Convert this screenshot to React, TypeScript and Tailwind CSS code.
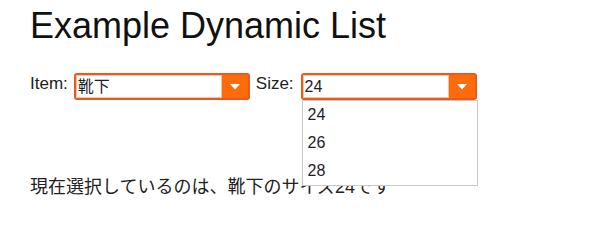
import React, { useState } from 'react';

const items = ['靴下', 'シャツ', '帽子'];
const sizes = ['24', '26', '28'];

type SelectProps = {
  value: string;
  open?: boolean;
  options?: string[];
};

const FakeSelect = ({ value, open, options = [] }: SelectProps) => {
  return (
    <div className="relative">
      <div className="flex h-[27px] w-[176px] rounded-[3px] border-2 border-[#ea5a1e] bg-[#ff6a0a]">
        <div className="flex flex-1 items-center border border-[#f7c3a6] bg-white pl-[1px] text-[16px] leading-[18px] text-[#1d1d2b]">
          {value}
        </div>
        <div className="flex w-[26px] items-center justify-center">
          <svg width="10" height="6" viewBox="0 0 10 6">
            <path d="M0 0 L10 0 L5 5.5 Z" fill="#fff" />
          </svg>
        </div>
      </div>
      {open && (
        <ul className="absolute left-[1px] top-[27px] z-10 w-[176px] border border-[#c8c8c8] bg-white">
          {options.map((o) => (
            <li key={o} className="h-[28px] pl-[5px] text-[16px] leading-[28px] text-[#1d1d2b]">
              {o}
            </li>
          ))}
        </ul>
      )}
    </div>
  );
};

const App = () => {
  const [item] = useState(items[0]);
  const [size] = useState(sizes[0]);

  return (
    <div className="px-[30px] pt-[5px] font-['Liberation_Sans','Noto_Sans_CJK_JP',sans-serif] text-[#222]">
      <h1 className="text-[36px] leading-[41px] font-normal text-[#111]">Example Dynamic List</h1>

      <div className="mt-[27px] flex items-start">
        <span className="mt-[2px] text-[17px] leading-[18px]">Item:</span>
        <div className="ml-[6px]">
          <FakeSelect value={item} />
        </div>
        <span className="ml-[6px] mt-[2px] text-[17px] leading-[18px]">Size:</span>
        <div className="ml-[7px]">
          <FakeSelect value={size} open options={sizes} />
        </div>
      </div>

      <p className="mt-[75px] text-[18px] leading-[24px]">
        現在選択しているのは、{item}のサイズ{size}です
      </p>
    </div>
  );
};

export default App;
